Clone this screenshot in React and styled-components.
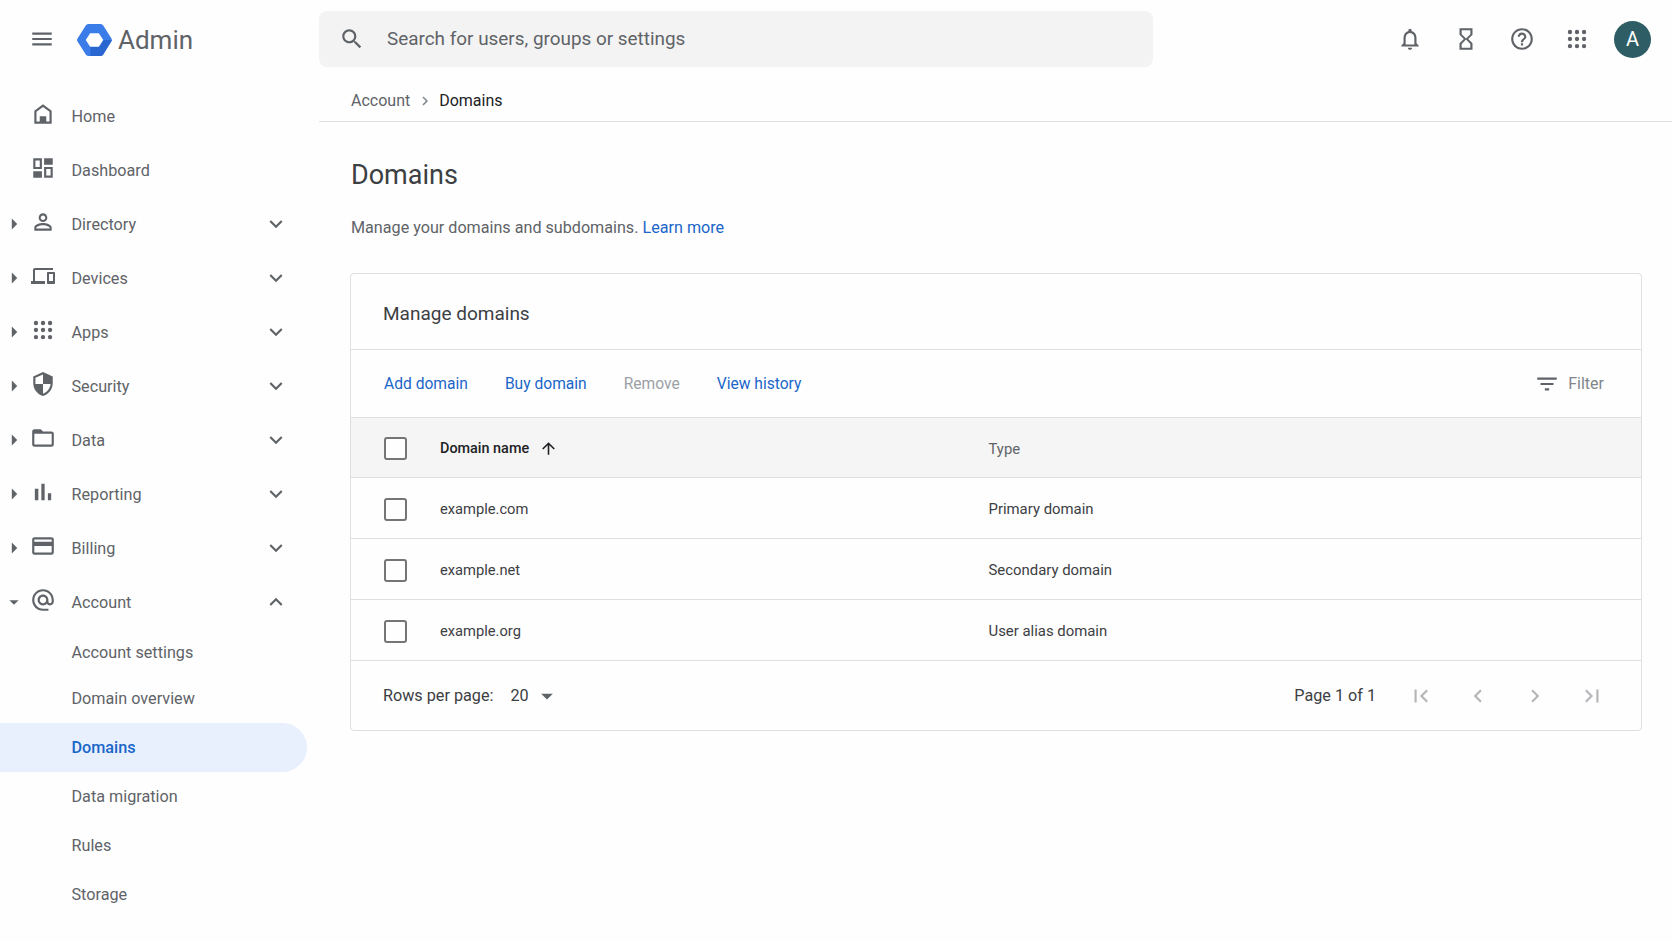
import React from "react";
import styled, { createGlobalStyle } from "styled-components";

const PATHS = {
  menu: "M3 18h18v-2H3v2zm0-5h18v-2H3v2zm0-7v2h18V6H3z",
  search:
    "M15.5 14h-.79l-.28-.27C15.41 12.59 16 11.11 16 9.5 16 5.91 13.09 3 9.5 3S3 5.91 3 9.5 5.91 16 9.5 16c1.61 0 3.09-.59 4.23-1.57l.27.28v.79l5 4.99L20.49 19l-4.99-5zm-6 0C7.01 14 5 11.99 5 9.5S7.01 5 9.5 5 14 7.01 14 9.5 11.99 14 9.5 14z",
  bell: "M12 22c1.1 0 2-.9 2-2h-4c0 1.1.9 2 2 2zm6-6v-5c0-3.07-1.63-5.64-4.5-6.32V4c0-.83-.67-1.5-1.5-1.5s-1.5.67-1.5 1.5v.68C7.64 5.36 6 7.92 6 11v5l-2 2v1h16v-1l-2-2zm-2 1H8v-6c0-2.48 1.51-4.5 4-4.5s4 2.02 4 4.5v6z",
  hourglass:
    "M6 2v6h.01L6 8.01 10 12l-4 4 .01.01H6V22h12v-5.99h-.01L18 16l-4-4 4-3.99-.01-.01H18V2H6zm10 14.5V20H8v-3.5l4-4 4 4zm-4-5l-4-4V4h8v3.5l-4 4z",
  help: "M11 18h2v-2h-2v2zm1-16C6.48 2 2 6.48 2 12s4.48 10 10 10 10-4.48 10-10S17.52 2 12 2zm0 18c-4.41 0-8-3.59-8-8s3.59-8 8-8 8 3.59 8 8-3.59 8-8 8zm0-14c-2.21 0-4 1.79-4 4h2c0-1.1.9-2 2-2s2 .9 2 2c0 2-3 1.75-3 5h2c0-2.25 3-2.5 3-5 0-2.21-1.79-4-4-4z",
  home: "M12 3L4 9v12h16V9l-8-6zm6 16H6v-9l6-4.5 6 4.5v9zM9 14h6v5H9z",
  dashboard:
    "M3 3h8v10H3V3zm2 2v6h4V5H5zm8-2h8v6h-8V3zM3 15h8v6H3v-6zm10-4h8v10h-8V11zm2 2v6h4v-6h-4z",
  person:
    "M12 5.9c1.16 0 2.1.94 2.1 2.1s-.94 2.1-2.1 2.1S9.9 9.16 9.9 8s.94-2.1 2.1-2.1m0 9c2.97 0 6.1 1.46 6.1 2.1v1.1H5.9V17c0-.64 3.13-2.1 6.1-2.1M12 4C9.79 4 8 5.79 8 8s1.79 4 4 4 4-1.79 4-4-1.79-4-4-4zm0 9c-2.67 0-8 1.34-8 4v3h16v-3c0-2.66-5.33-4-8-4z",
  devices:
    "M4 6h18V4H4c-1.1 0-2 .9-2 2v11H0v3h14v-3H4V6zm19 2h-6c-.55 0-1 .45-1 1v10c0 .55.45 1 1 1h6c.55 0 1-.45 1-1V9c0-.55-.45-1-1-1zm-1 9h-4v-7h4v7z",
  shield:
    "M12 1L3 5v6c0 5.55 3.84 10.74 9 12 5.16-1.26 9-6.45 9-12V5l-9-4zm0 10.99h7c-.53 4.12-3.28 7.79-7 8.94V12H5V6.3l7-3.11v8.8z",
  folder:
    "M20 6h-8l-2-2H4c-1.1 0-1.99.9-1.99 2L2 18c0 1.1.9 2 2 2h16c1.1 0 2-.9 2-2V8c0-1.1-.9-2-2-2zm0 12H4V8h16v10z",
  chart: "M5 9.2h3V19H5zM10.6 5h2.8v14h-2.8zm5.6 8H19v6h-2.8z",
  card: "M20 4H4c-1.11 0-1.99.89-1.99 2L2 18c0 1.11.89 2 2 2h16c1.11 0 2-.89 2-2V6c0-1.11-.89-2-2-2zm0 14H4v-6h16v6zm0-10H4V6h16v2z",
  at: "M12 2C6.48 2 2 6.48 2 12s4.48 10 10 10h5v-2h-5c-4.34 0-8-3.66-8-8s3.66-8 8-8 8 3.66 8 8v1.43c0 .79-.71 1.57-1.5 1.57s-1.5-.78-1.5-1.57V12c0-2.76-2.24-5-5-5s-5 2.24-5 5 2.24 5 5 5c1.38 0 2.64-.56 3.54-1.47.65.89 1.77 1.47 2.96 1.47 1.97 0 3.5-1.6 3.5-3.57V12c0-5.52-4.48-10-10-10zm0 13c-1.66 0-3-1.34-3-3s1.34-3 3-3 3 1.34 3 3-1.34 3-3 3z",
  more: "M16.59 8.59L12 13.17 7.41 8.59 6 10l6 6 6-6z",
  less: "M12 8l-6 6 1.41 1.41L12 10.83l4.59 4.58L18 14z",
  caretRight: "M10 17l5-5-5-5v10z",
  caretDown: "M7 10l5 5 5-5z",
  filter: "M10 18h4v-2h-4v2zM3 6v2h18V6H3zm3 7h12v-2H6v2z",
  up: "M4 12l1.41 1.41L11 7.83V20h2V7.83l5.58 5.59L20 12l-8-8-8 8z",
  first: "M18.41 16.59L13.82 12l4.59-4.59L17 6l-6 6 6 6zM6 6h2v12H6z",
  prev: "M15.41 7.41L14 6l-6 6 6 6 1.41-1.41L10.83 12z",
  next: "M10 6L8.59 7.41 13.17 12l-4.58 4.59L10 18l6-6z",
  last: "M5.59 7.41L10.18 12l-4.59 4.59L7 18l6-6-6-6zM16 6h2v12h-2z",
};

function Icon({ name, size = 24, color = "#5f6368" }) {
  return (
    <svg width={size} height={size} viewBox="0 0 24 24" fill={color} style={{ flex: "none" }}>
      <path d={PATHS[name]} fillRule="evenodd" />
    </svg>
  );
}

function Dots({ size = 24, color = "#5f6368" }) {
  const spots = [5.5, 12, 18.5];
  return (
    <svg width={size} height={size} viewBox="0 0 24 24" fill={color} style={{ flex: "none" }}>
      {spots.map((y) =>
        spots.map((x) => <circle key={`${x}-${y}`} cx={x} cy={y} r="2" />)
      )}
    </svg>
  );
}

function Logo() {
  return (
    <svg width="35" height="32" viewBox="0 0 36 33" style={{ flex: "none" }}>
      <path d="M9 1.5 a3 3 0 0 1 2.5-1.5 H24.500 a3 3 0 0 1 2.500 1.500 L35.500 15 a3 3 0 0 1 0 3 L27 31.500 a3 3 0 0 1-2.500 1.500 H11.500 a3 3 0 0 1-2.500-1.500 L.500 18 a3 3 0 0 1 0-3z" fill="#3b7de8" />
      <path d="M27 16.500 L35.800 16.500 L27 31.500 a3 3 0 0 1-2.500 1.500 H14 L13.500 23.500 H22.500z" fill="#2a66d0" />
      <path d="M13.500 9.500 H22.500 L27 16.500 L22.500 23.500 H13.500 L9 16.500z" fill="#fff" />
    </svg>
  );
}

const navItems = [
  { label: "Home", icon: "home" },
  { label: "Dashboard", icon: "dashboard" },
  { label: "Directory", icon: "person", group: true },
  { label: "Devices", icon: "devices", size: 24, group: true },
  { label: "Apps", dots: true, group: true },
  { label: "Security", icon: "shield", group: true },
  { label: "Data", icon: "folder", group: true },
  { label: "Reporting", icon: "chart", size: 28, group: true },
  { label: "Billing", icon: "card", group: true },
  { label: "Account", icon: "at", group: true, open: true },
];

const subItems = [
  { label: "Account settings", height: 45 },
  { label: "Domain overview", height: 46 },
  { label: "Domains", height: 49, active: true },
  { label: "Data migration", height: 49 },
  { label: "Rules", height: 49 },
  { label: "Storage", height: 49 },
];

const domains = [
  { name: "example.com", type: "Primary domain" },
  { name: "example.net", type: "Secondary domain" },
  { name: "example.org", type: "User alias domain" },
];

export default function App() {
  return (
    <Page>
      <GlobalStyle />
      <Header>
        <Brand>
          <Icon name="menu" size={26} />
          <Logo />
          <BrandName>Admin</BrandName>
        </Brand>
        <SearchBox>
          <Icon name="search" size={26} />
          <SearchText>Search for users, groups or settings</SearchText>
        </SearchBox>
        <HeaderIcons>
          <HeaderIcon><Icon name="bell" size={26} /></HeaderIcon>
          <HeaderIcon><Icon name="hourglass" size={26} /></HeaderIcon>
          <HeaderIcon><Icon name="help" size={26} /></HeaderIcon>
          <HeaderIcon $narrow><Dots size={26} /></HeaderIcon>
          <Avatar>A</Avatar>
        </HeaderIcons>
      </Header>
      <Body>
        <Sidebar>
          {navItems.map((item) => (
            <NavRow key={item.label}>
              <Caret>
                {item.group && (
                  <Icon
                    name={item.open ? "caretDown" : "caretRight"}
                    size={item.open ? 22 : 26}
                  />
                )}
              </Caret>
              <NavIcon>
                {item.dots ? <Dots size={26} /> : <Icon name={item.icon} size={item.size || 26} />}
              </NavIcon>
              <NavLabel>{item.label}</NavLabel>
              {item.group && <Icon name={item.open ? "less" : "more"} size={26} />}
            </NavRow>
          ))}
          <SubList>
            {subItems.map((item) => (
              <SubItem key={item.label} $active={item.active} $height={item.height}>
                {item.label}
              </SubItem>
            ))}
          </SubList>
        </Sidebar>
        <Main>
          <Breadcrumb>
            <Crumb>Account</Crumb>
            <Icon name="next" size={18} color="#80868b" />
            <Crumb $current>Domains</Crumb>
          </Breadcrumb>
          <Content>
            <Title>Domains</Title>
            <Intro>
              Manage your domains and subdomains. <LinkText>Learn more</LinkText>
            </Intro>
            <Card>
              <CardTitle>Manage domains</CardTitle>
              <Toolbar>
                <Actions>
                  <ActionText>Add domain</ActionText>
                  <ActionText>Buy domain</ActionText>
                  <ActionText $disabled>Remove</ActionText>
                  <ActionText>View history</ActionText>
                </Actions>
                <FilterButton>
                  <Icon name="filter" size={26} />
                  Filter
                </FilterButton>
              </Toolbar>
              <TableRow $head>
                <Checkbox />
                <NameCell $head>
                  Domain name
                  <Icon name="up" size={19} color="#202124" />
                </NameCell>
                <TypeCell $head>Type</TypeCell>
              </TableRow>
              {domains.map((d) => (
                <TableRow key={d.name}>
                  <Checkbox />
                  <NameCell>{d.name}</NameCell>
                  <TypeCell>{d.type}</TypeCell>
                </TableRow>
              ))}
              <Footer>
                <RowsLabel>Rows per page:</RowsLabel>
                <RowsValue>
                  20
                  <Icon name="caretDown" size={28} />
                </RowsValue>
                <PageText>Page 1 of 1</PageText>
                <Pager>
                  <PagerButton><Icon name="first" size={26} color="#b4b6b9" /></PagerButton>
                  <PagerButton><Icon name="prev" size={26} color="#b4b6b9" /></PagerButton>
                  <PagerButton><Icon name="next" size={26} color="#b4b6b9" /></PagerButton>
                  <PagerButton><Icon name="last" size={26} color="#b4b6b9" /></PagerButton>
                </Pager>
              </Footer>
            </Card>
          </Content>
        </Main>
      </Body>
    </Page>
  );
}

const GlobalStyle = createGlobalStyle`
  html, body {
    margin: 0;
    padding: 0;
    background: #fefefe;
    overflow: hidden;
  }
  * {
    box-sizing: border-box;
  }
`;

const Page = styled.div`
  width: 1672px;
  height: 941px;
  overflow: hidden;
  font-family: Roboto, "Liberation Sans", sans-serif;
  font-size: 16px;
  color: #5f6368;
`;

const Header = styled.header`
  display: flex;
  align-items: center;
  height: 78px;
`;

const Brand = styled.div`
  display: flex;
  align-items: center;
  width: 319px;
  padding-left: 29px;
  svg:nth-child(2) {
    margin: 2px 0 0 22px;
  }
`;

const BrandName = styled.span`
  margin: 2px 0 0 6px;
  font-size: 26px;
  color: #5f6368;
`;

const SearchBox = styled.div`
  display: flex;
  align-items: center;
  gap: 22px;
  width: 834px;
  height: 56px;
  padding-left: 20px;
  border-radius: 8px;
  background: #f3f3f3;
`;

const SearchText = styled.span`
  margin-bottom: 2px;
  font-size: 18.900px;
  color: #5f6368;
`;

const HeaderIcons = styled.div`
  display: flex;
  align-items: center;
  margin-left: auto;
  padding-right: 21px;
`;

const HeaderIcon = styled.div`
  display: flex;
  justify-content: center;
  width: ${(p) => (p.$narrow ? "54px" : "56px")};
`;

const Avatar = styled.div`
  display: flex;
  align-items: center;
  justify-content: center;
  width: 37px;
  height: 37px;
  margin-left: 10px;
  border-radius: 50%;
  background: #2f5d66;
  color: #fff;
  font-size: 20px;
`;

const Body = styled.div`
  display: flex;
`;

const Sidebar = styled.nav`
  width: 319px;
  flex: none;
  padding-top: 11px;
  font-size: 16.200px;
`;

const NavRow = styled.div`
  display: flex;
  align-items: center;
  height: 54px;
  width: 289px;
`;

const Caret = styled.div`
  display: flex;
  justify-content: center;
  width: 27px;
  margin-right: -3px;
`;

const NavIcon = styled.div`
  display: flex;
  justify-content: center;
  width: 38px;
  margin-bottom: 5px;
`;

const NavLabel = styled.span`
  flex: 1;
  margin-left: 9.500px;
`;

const SubList = styled.div`
  display: flex;
  flex-direction: column;
  padding-top: 1px;
`;

const SubItem = styled.div`
  display: flex;
  align-items: center;
  flex: none;
  width: 307px;
  height: ${(p) => p.$height}px;
  margin-top: ${(p) => (p.$active ? "2px" : "0")};
  padding-left: 71.500px;
  border-radius: ${(p) => (p.$active ? "0 25px 25px 0" : "0")};
  background: ${(p) => (p.$active ? "#e8f0fe" : "transparent")};
  color: ${(p) => (p.$active ? "#1a66c9" : "#5f6368")};
  font-weight: ${(p) => (p.$active ? 500 : 400)};
`;

const Main = styled.main`
  flex: 1;
  min-width: 0;
`;

const Breadcrumb = styled.div`
  display: flex;
  align-items: center;
  gap: 5px;
  height: 44px;
  padding: 2px 0 0 32px;
  border-bottom: 1px solid #e0e0e0;
`;

const Crumb = styled.span`
  margin-right: 1px;
  color: ${(p) => (p.$current ? "#202124" : "#5f6368")};
`;

const Content = styled.div`
  padding: 0 30px 0 31px;
`;

const Title = styled.h1`
  margin: 35px 0 0 1px;
  font-size: 27px;
  line-height: 36px;
  font-weight: 400;
  color: #3c4043;
`;

const Intro = styled.p`
  margin: 23px 0 0 1px;
  font-size: 16.150px;
  line-height: 24px;
`;

const LinkText = styled.span`
  color: #1a66c9;
`;

const Card = styled.section`
  margin-top: 33px;
  border: 1px solid #dfdfdf;
  border-radius: 4px;
  background: #fefefe;
`;

const CardTitle = styled.h2`
  display: flex;
  align-items: center;
  height: 76px;
  margin: 0;
  padding: 4px 0 0 32px;
  border-bottom: 1px solid #dfdfdf;
  font-size: 19px;
  font-weight: 400;
  color: #3c4043;
`;

const Toolbar = styled.div`
  display: flex;
  align-items: center;
  justify-content: space-between;
  height: 68px;
  padding: 0 37px 0 33px;
  border-bottom: 1px solid #dfdfdf;
`;

const Actions = styled.div`
  display: flex;
  gap: 37px;
  font-size: 15.600px;
`;

const ActionText = styled.span`
  color: ${(p) => (p.$disabled ? "#9aa0a6" : "#1a66c9")};
`;

const FilterButton = styled.div`
  display: flex;
  align-items: center;
  gap: 8px;
  color: #80868b;
`;

const TableRow = styled.div`
  display: flex;
  align-items: center;
  height: ${(p) => (p.$head ? "60px" : "61px")};
  padding: 2px 0 0 33px;
  border-bottom: 1px solid #dfdfdf;
  background: ${(p) => (p.$head ? "#f5f5f5" : "transparent")};
`;

const Checkbox = styled.div`
  width: 23px;
  height: 23px;
  flex: none;
  border: 2px solid #757575;
  border-radius: 3px;
  background: #fefefe;
`;

const NameCell = styled.div`
  display: flex;
  align-items: center;
  gap: 10px;
  width: 548.500px;
  margin-left: 33px;
  font-size: ${(p) => (p.$head ? "14.400px" : "14.700px")};
  font-weight: ${(p) => (p.$head ? 500 : 400)};
  color: ${(p) => (p.$head ? "#202124" : "#3c4043")};
`;

const TypeCell = styled.div`
  font-size: 14.900px;
  color: ${(p) => (p.$head ? "#5f6368" : "#3c4043")};
`;

const Footer = styled.div`
  display: flex;
  align-items: center;
  height: 69px;
  padding: 0 36px 0 32px;
  font-size: 16.200px;
  color: #3c4043;
`;

const RowsLabel = styled.span`
  margin-right: 17px;
`;

const RowsValue = styled.div`
  display: flex;
  align-items: center;
  gap: 4px;
`;

const PageText = styled.span`
  margin-left: auto;
  margin-right: 32px;
`;

const Pager = styled.div`
  display: flex;
  gap: 31px;
`;

const PagerButton = styled.div`
  display: flex;
`;
